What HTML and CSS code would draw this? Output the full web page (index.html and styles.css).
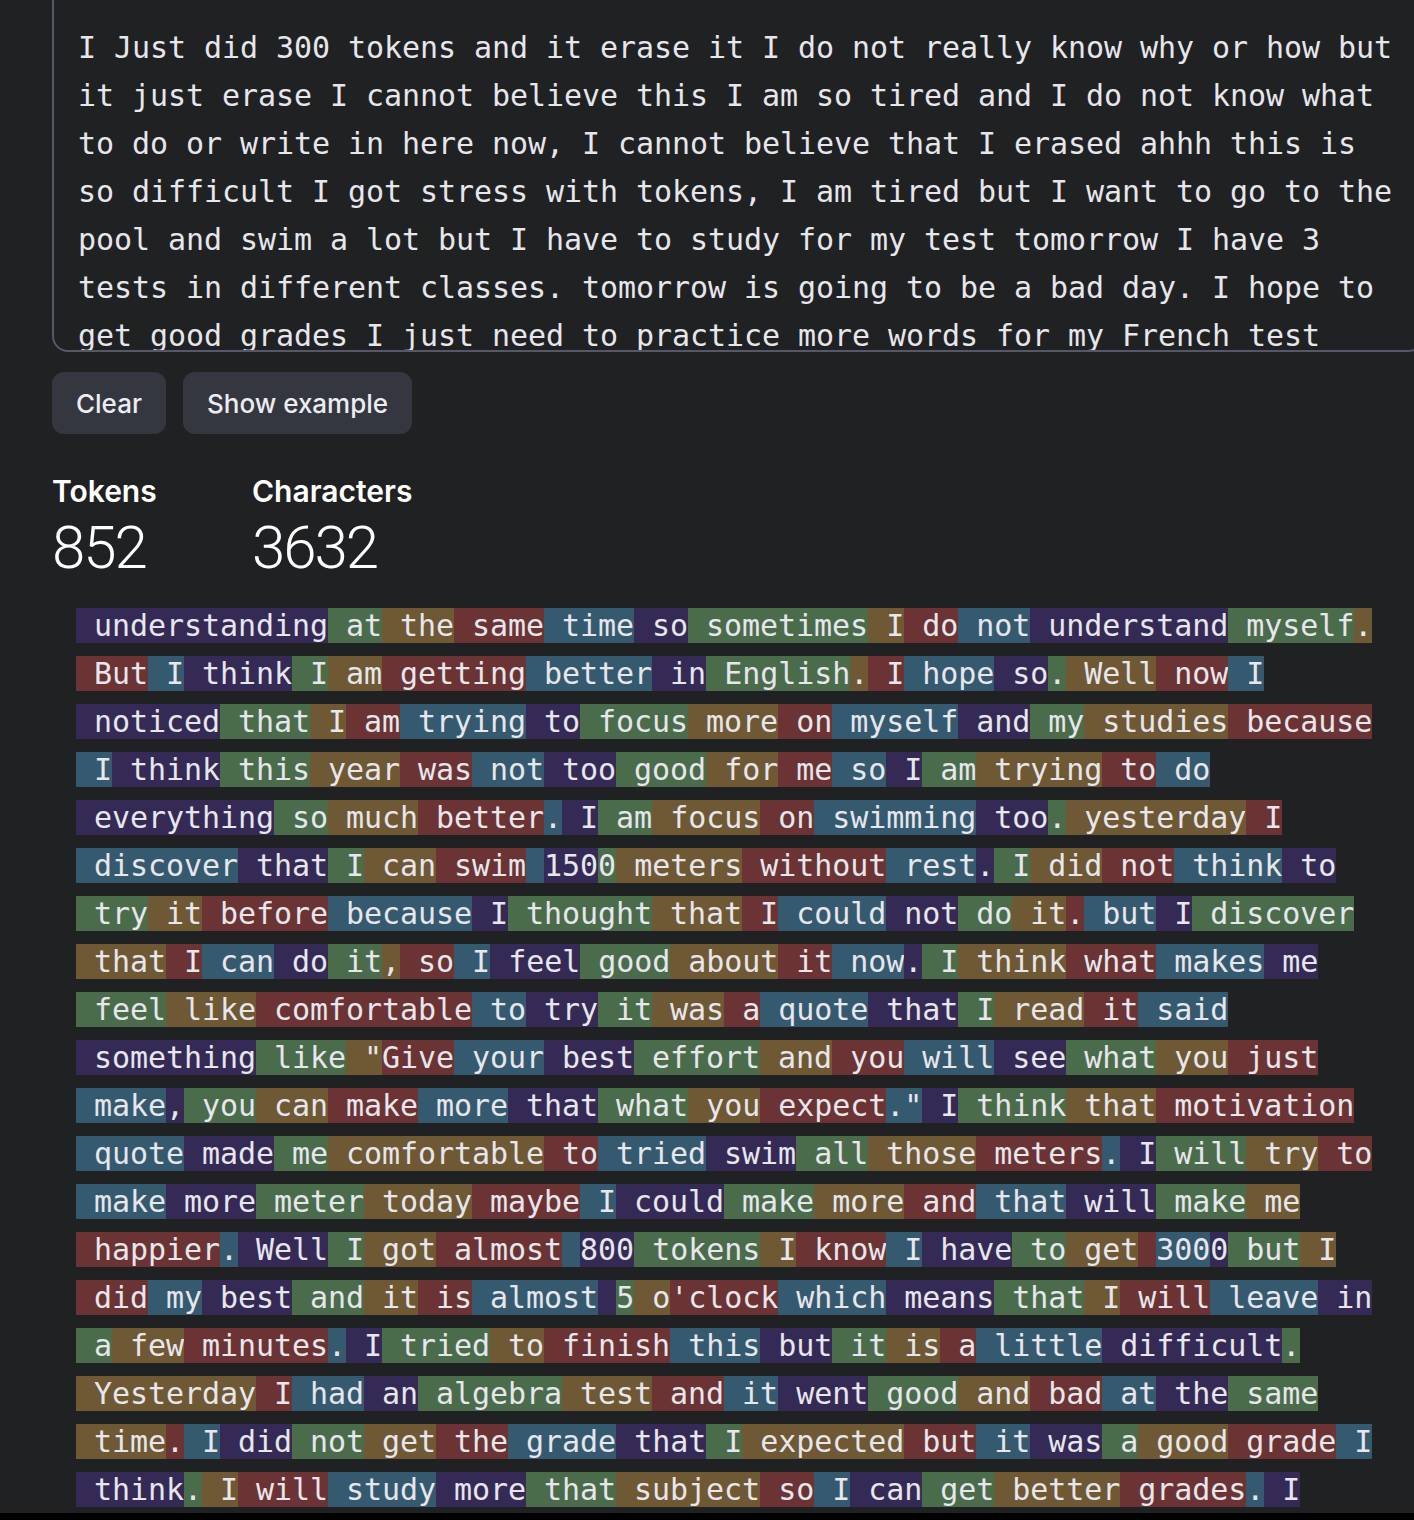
FILE: index.html
```html
<!DOCTYPE html>
<html lang="en">
<head>
<meta charset="utf-8">
<title>Tokenizer</title>
<link rel="stylesheet" href="styles.css">
</head>
<body>
<main class="page">
<textarea class="input" aria-label="Text to tokenize">I Just did 300 tokens and it erase it I do not really know why or how but it just erase I cannot believe this I am so tired and I do not know what to do or write in here now, I cannot believe that I erased ahhh this is so difficult I got stress with tokens, I am tired but I want to go to the pool and swim a lot but I have to study for my test tomorrow I have 3 tests in different classes. tomorrow is going to be a bad day. I hope to get good grades I just need to practice more words for my French test
because I have to study a lot of words for that test.</textarea>
<div class="actions">
<button class="btn" type="button">Clear</button>
<button class="btn" type="button">Show example</button>
</div>
<div class="stats">
<div class="stat"><div class="stat-label">Tokens</div><div class="stat-value">852</div></div>
<div class="stat"><div class="stat-label">Characters</div><div class="stat-value">3632</div></div>
</div>
<div class="tokens">
<div class="line"><span class="c0"> understanding</span><span class="c1"> at</span><span class="c2"> the</span><span class="c3"> same</span><span class="c4"> time</span><span class="c0"> so</span><span class="c1"> sometimes</span><span class="c2"> I</span><span class="c3"> do</span><span class="c4"> not</span><span class="c0"> understand</span><span class="c1"> myself</span><span class="c2">.</span></div>
<div class="line"><span class="c3"> But</span><span class="c4"> I</span><span class="c0"> think</span><span class="c1"> I</span><span class="c2"> am</span><span class="c3"> getting</span><span class="c4"> better</span><span class="c0"> in</span><span class="c1"> English</span><span class="c2">.</span><span class="c3"> I</span><span class="c4"> hope</span><span class="c0"> so</span><span class="c1">.</span><span class="c2"> Well</span><span class="c3"> now</span><span class="c4"> I</span></div>
<div class="line"><span class="c0"> noticed</span><span class="c1"> that</span><span class="c2"> I</span><span class="c3"> am</span><span class="c4"> trying</span><span class="c0"> to</span><span class="c1"> focus</span><span class="c2"> more</span><span class="c3"> on</span><span class="c4"> myself</span><span class="c0"> and</span><span class="c1"> my</span><span class="c2"> studies</span><span class="c3"> because</span></div>
<div class="line"><span class="c4"> I</span><span class="c0"> think</span><span class="c1"> this</span><span class="c2"> year</span><span class="c3"> was</span><span class="c4"> not</span><span class="c0"> too</span><span class="c1"> good</span><span class="c2"> for</span><span class="c3"> me</span><span class="c4"> so</span><span class="c0"> I</span><span class="c1"> am</span><span class="c2"> trying</span><span class="c3"> to</span><span class="c4"> do</span></div>
<div class="line"><span class="c0"> everything</span><span class="c1"> so</span><span class="c2"> much</span><span class="c3"> better</span><span class="c4">.</span><span class="c0"> I</span><span class="c1"> am</span><span class="c2"> focus</span><span class="c3"> on</span><span class="c4"> swimming</span><span class="c0"> too</span><span class="c1">.</span><span class="c2"> yesterday</span><span class="c3"> I</span></div>
<div class="line"><span class="c4"> discover</span><span class="c0"> that</span><span class="c1"> I</span><span class="c2"> can</span><span class="c3"> swim</span><span class="c4"> </span><span class="c0">150</span><span class="c1">0</span><span class="c2"> meters</span><span class="c3"> without</span><span class="c4"> rest</span><span class="c0">.</span><span class="c1"> I</span><span class="c2"> did</span><span class="c3"> not</span><span class="c4"> think</span><span class="c0"> to</span></div>
<div class="line"><span class="c1"> try</span><span class="c2"> it</span><span class="c3"> before</span><span class="c4"> because</span><span class="c0"> I</span><span class="c1"> thought</span><span class="c2"> that</span><span class="c3"> I</span><span class="c4"> could</span><span class="c0"> not</span><span class="c1"> do</span><span class="c2"> it</span><span class="c3">.</span><span class="c4"> but</span><span class="c0"> I</span><span class="c1"> discover</span></div>
<div class="line"><span class="c2"> that</span><span class="c3"> I</span><span class="c4"> can</span><span class="c0"> do</span><span class="c1"> it</span><span class="c2">,</span><span class="c3"> so</span><span class="c4"> I</span><span class="c0"> feel</span><span class="c1"> good</span><span class="c2"> about</span><span class="c3"> it</span><span class="c4"> now</span><span class="c0">.</span><span class="c1"> I</span><span class="c2"> think</span><span class="c3"> what</span><span class="c4"> makes</span><span class="c0"> me</span></div>
<div class="line"><span class="c1"> feel</span><span class="c2"> like</span><span class="c3"> comfortable</span><span class="c4"> to</span><span class="c0"> try</span><span class="c1"> it</span><span class="c2"> was</span><span class="c3"> a</span><span class="c4"> quote</span><span class="c0"> that</span><span class="c1"> I</span><span class="c2"> read</span><span class="c3"> it</span><span class="c4"> said</span></div>
<div class="line"><span class="c0"> something</span><span class="c1"> like</span><span class="c2"> "</span><span class="c3">Give</span><span class="c4"> your</span><span class="c0"> best</span><span class="c1"> effort</span><span class="c2"> and</span><span class="c3"> you</span><span class="c4"> will</span><span class="c0"> see</span><span class="c1"> what</span><span class="c2"> you</span><span class="c3"> just</span></div>
<div class="line"><span class="c4"> make</span><span class="c0">,</span><span class="c1"> you</span><span class="c2"> can</span><span class="c3"> make</span><span class="c4"> more</span><span class="c0"> that</span><span class="c1"> what</span><span class="c2"> you</span><span class="c3"> expect</span><span class="c4">."</span><span class="c0"> I</span><span class="c1"> think</span><span class="c2"> that</span><span class="c3"> motivation</span></div>
<div class="line"><span class="c4"> quote</span><span class="c0"> made</span><span class="c1"> me</span><span class="c2"> comfortable</span><span class="c3"> to</span><span class="c4"> tried</span><span class="c0"> swim</span><span class="c1"> all</span><span class="c2"> those</span><span class="c3"> meters</span><span class="c4">.</span><span class="c0"> I</span><span class="c1"> will</span><span class="c2"> try</span><span class="c3"> to</span></div>
<div class="line"><span class="c4"> make</span><span class="c0"> more</span><span class="c1"> meter</span><span class="c2"> today</span><span class="c3"> maybe</span><span class="c4"> I</span><span class="c0"> could</span><span class="c1"> make</span><span class="c2"> more</span><span class="c3"> and</span><span class="c4"> that</span><span class="c0"> will</span><span class="c1"> make</span><span class="c2"> me</span></div>
<div class="line"><span class="c3"> happier</span><span class="c4">.</span><span class="c0"> Well</span><span class="c1"> I</span><span class="c2"> got</span><span class="c3"> almost</span><span class="c4"> </span><span class="c0">800</span><span class="c1"> tokens</span><span class="c2"> I</span><span class="c3"> know</span><span class="c4"> I</span><span class="c0"> have</span><span class="c1"> to</span><span class="c2"> get</span><span class="c3"> </span><span class="c4">300</span><span class="c0">0</span><span class="c1"> but</span><span class="c2"> I</span></div>
<div class="line"><span class="c3"> did</span><span class="c4"> my</span><span class="c0"> best</span><span class="c1"> and</span><span class="c2"> it</span><span class="c3"> is</span><span class="c4"> almost</span><span class="c0"> </span><span class="c1">5</span><span class="c2"> o</span><span class="c3">'clock</span><span class="c4"> which</span><span class="c0"> means</span><span class="c1"> that</span><span class="c2"> I</span><span class="c3"> will</span><span class="c4"> leave</span><span class="c0"> in</span></div>
<div class="line"><span class="c1"> a</span><span class="c2"> few</span><span class="c3"> minutes</span><span class="c4">.</span><span class="c0"> I</span><span class="c1"> tried</span><span class="c2"> to</span><span class="c3"> finish</span><span class="c4"> this</span><span class="c0"> but</span><span class="c1"> it</span><span class="c2"> is</span><span class="c3"> a</span><span class="c4"> little</span><span class="c0"> difficult</span><span class="c1">.</span></div>
<div class="line"><span class="c2"> Yesterday</span><span class="c3"> I</span><span class="c4"> had</span><span class="c0"> an</span><span class="c1"> algebra</span><span class="c2"> test</span><span class="c3"> and</span><span class="c4"> it</span><span class="c0"> went</span><span class="c1"> good</span><span class="c2"> and</span><span class="c3"> bad</span><span class="c4"> at</span><span class="c0"> the</span><span class="c1"> same</span></div>
<div class="line"><span class="c2"> time</span><span class="c3">.</span><span class="c4"> I</span><span class="c0"> did</span><span class="c1"> not</span><span class="c2"> get</span><span class="c3"> the</span><span class="c4"> grade</span><span class="c0"> that</span><span class="c1"> I</span><span class="c2"> expected</span><span class="c3"> but</span><span class="c4"> it</span><span class="c0"> was</span><span class="c1"> a</span><span class="c2"> good</span><span class="c3"> grade</span><span class="c4"> I</span></div>
<div class="line"><span class="c0"> think</span><span class="c1">.</span><span class="c2"> I</span><span class="c3"> will</span><span class="c4"> study</span><span class="c0"> more</span><span class="c1"> that</span><span class="c2"> subject</span><span class="c3"> so</span><span class="c4"> I</span><span class="c0"> can</span><span class="c1"> get</span><span class="c2"> better</span><span class="c3"> grades</span><span class="c4">.</span><span class="c0"> I</span></div>
</div>
</main>
</body>
</html>
```
FILE: styles.css
```css
html {
  background: #000;
}

body {
  margin: 0;
  height: 1513px;
  overflow: hidden;
  background: #202123;
  color: #ececf1;
  font-family: Inter, "Noto Sans", sans-serif;
}

.page {
  display: flex;
  flex-direction: column;
  align-items: flex-start;
  padding-left: 52px;
}

.input {
  display: block;
  box-sizing: border-box;
  width: 1372px;
  height: 378px;
  margin: -26px 0 0;
  padding: 48px 24px 24px;
  border: 2px solid #565869;
  border-radius: 16px;
  background: transparent;
  color: #e6e6ec;
  font-family: "DejaVu Sans Mono", monospace;
  font-size: 30px;
  line-height: 48px;
  letter-spacing: -0.06px;
  resize: none;
  overflow: hidden;
  outline: none;
}

.actions {
  display: flex;
  gap: 17px;
  margin-top: 20px;
}

.btn {
  height: 62px;
  padding: 0 24px;
  border: 0;
  border-radius: 12px;
  background: #353740;
  color: #ececf1;
  font-family: Inter, "Noto Sans", sans-serif;
  font-size: 26px;
  font-weight: 500;
}

.stats {
  display: flex;
  margin-top: 40px;
}

.stat {
  min-width: 200px;
}

.stat-label {
  font-size: 30px;
  line-height: 34px;
  font-weight: 600;
  color: #fff;
}

.stat-value {
  margin-top: 10px;
  font-family: Roboto, "Liberation Sans", sans-serif;
  font-weight: 300;
  font-size: 60px;
  line-height: 60px;
  letter-spacing: -2px;
  color: #fff;
}

.tokens {
  margin: 24px 0 0 24px;
  font-family: "DejaVu Sans Mono", monospace;
  font-size: 30px;
  letter-spacing: -0.06px;
  color: #e6e6ec;
}

.line {
  height: 48px;
  line-height: 48px;
  white-space: pre;
}

.c0 { background: #352a55; }
.c1 { background: #4a6c4b; }
.c2 { background: #6f5834; }
.c3 { background: #6b3334; }
.c4 { background: #355a6f; }
```
